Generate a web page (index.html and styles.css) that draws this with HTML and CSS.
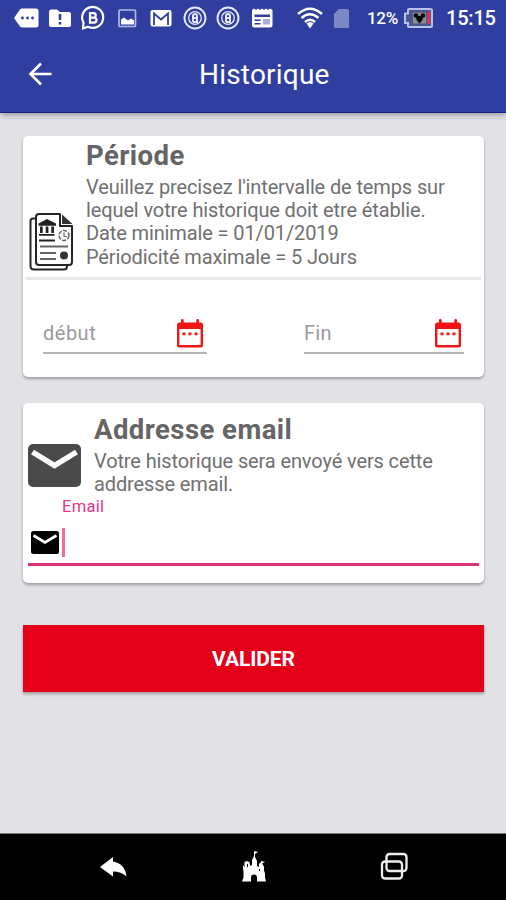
FILE: index.html
```html
<!DOCTYPE html>
<html lang="fr">
<head>
<meta charset="utf-8">
<title>Historique</title>
<link rel="stylesheet" href="styles.css">
</head>
<body>
<div class="screen">
  <header class="top">
    <div class="status">
      <div class="notifications">
        <svg viewBox="0 0 26 26"><path fill="#fff" d="M1 13 7 4.500Q8 3.500 9 3.500H23Q25.500 3.500 25.500 6V20Q25.500 22.500 23 22.500H9Q8 22.500 7 21.500Z"/><g fill="#303f9f"><circle cx="9.500" cy="13" r="1.400"/><circle cx="14.500" cy="13" r="1.400"/><circle cx="19.500" cy="13" r="1.400"/></g></svg>
        <svg viewBox="0 0 26 26"><path fill="#fff" d="M2 7Q2 4.500 4 4.500H10L13 7H22Q24 7 24 9V20Q24 22 22 22H4Q2 22 2 20Z"/><path fill="#303f9f" d="M11.700 9h2.600v6h-2.600zM11.700 17h2.600v2.500h-2.600z"/></svg>
        <svg viewBox="0 0 26 26"><path fill="none" stroke="#fff" stroke-width="2.200" d="M3 23.500 3.500 17.500A10.500 10.500 0 1 1 8 21.800Z"/><path fill="none" stroke="#fff" stroke-width="2.200" d="M10 8.200h3.500a2.200 2.200 0 0 1 0 4.400H10h4a2.500 2.500 0 0 1 0 5h-4zV17.600"/></svg>
        <svg viewBox="0 0 26 26"><rect x="5" y="5" width="16.500" height="16.500" rx="1" fill="#303f9f" stroke="#b4bbe6" stroke-width="1.700"/><path fill="#fff" d="M7 19.500v-5l3-2 4 3 3-2 3 2v4z"/></svg>
        <svg viewBox="0 0 26 26"><rect x="2.500" y="5" width="21" height="16.500" rx="2" fill="#fff"/><path fill="none" stroke="#303f9f" stroke-width="1.800" d="M6 20V8.500l7 6 7-6V20"/></svg>
        <svg viewBox="0 0 26 26"><g fill="none" stroke="#e6e9fb"><circle cx="13" cy="13" r="10.500" stroke-width="1.900"/><circle cx="13" cy="13" r="6.300" stroke-width="1.300"/><path stroke-width="2" d="M11 17v-6q0-2 2-2t2 2v2h-4m4 0v4h-4"/></g></svg>
        <svg viewBox="0 0 26 26"><g fill="none" stroke="#e6e9fb"><circle cx="13" cy="13" r="10.500" stroke-width="1.900"/><circle cx="13" cy="13" r="6.300" stroke-width="1.300"/><path stroke-width="2" d="M11 17v-6q0-2 2-2t2 2v2h-4m4 0v4h-4"/></g></svg>
        <svg viewBox="0 0 26 26"><path fill="#fff" d="M3 5l2-1.500L7 5l2-1.500L11 5l2-1.500L15 5l2-1.500L19 5l2-1.500L23.500 5v15q0 2.500-2.500 2.500H5.500Q3 22.500 3 20z"/><path fill="#303f9f" d="M5.500 9.500H21v2.500H5.500zM5.500 14.500h6V16h-6zM5.500 18h6v1.500h-6z"/><path fill="#a9b0dc" d="M14 14h7v5.500h-7z"/></svg>
      </div>
      <svg class="wifi" viewBox="0 0 26 24"><g fill="none" stroke="#fff" stroke-width="2.500"><path d="M1 8q12-10.500 24 0M4.500 12q8.500-7.500 17 0M8 16q5-4.500 10 0"/></g><path fill="#fff" d="M9.500 17.500q3.500-3 7 0L13 22.500z"/></svg>
      <svg class="sim" viewBox="0 0 15 19"><path fill="#7e87c5" d="M5 0h8.500Q15 0 15 1.500v16q0 1.500-1.500 1.500h-12Q0 19 0 17.500V5z"/></svg>
      <span class="percent">12%</span>
      <svg class="battery" viewBox="0 0 29 20"><path fill="#4b558f" stroke="#b9c0ea" stroke-width="2" d="M5 1h21.500q1.500 0 1.500 1.500v15q0 1.500-1.500 1.500H5q-1 0-1-1v-3H1V5.500h3V2q0-1 1-1z"/><path fill="#8d8c92" d="M9 4.500h13v11H9z"/><g fill="#080808"><circle cx="12" cy="7.500" r="2.300"/><circle cx="19" cy="7.500" r="2.300"/><path d="M12 8h7l-.5 4-3 3.500-3-3.500z"/></g><path fill="#f3313f" d="M23.500 4H26v12h-2.500z"/></svg>
      <span class="clock">15:15</span>
    </div>
    <div class="appbar">
      <svg class="back" viewBox="0 0 24 24"><path fill="none" stroke="#fff" stroke-width="2.600" d="M23.500 12H2.500M13 1.500 2.500 12 13 22.500"/></svg>
      <h1 class="title">Historique</h1>
    </div>
  </header>

  <main class="content">
    <section class="card period">
      <div class="intro">
        <svg class="docs" viewBox="0 0 46 60"><g fill="none" stroke="#252525" stroke-width="2" stroke-linejoin="round"><path d="M7 6.500H4Q1.500 6.500 1.500 9V54Q1.500 57.500 5 57.500H35Q38 57.500 38 54V53"/><path d="M10 2H31V14H43V50Q43 53 40 53H10Q7 53 7 50V5Q7 2 10 2z"/></g><path fill="#333" d="M33 2.500 43.500 12H33z"/><g fill="#222"><path d="M18 7l9 4.500v2.200H9.500v-2.200zM11 14.500h2.700V21H11zM16.700 14.500h2.700V21h-2.700zM22.300 14.500H25V21h-2.700zM10 22h15.500v1.800H10zM10 27.500h16v2H10z"/></g><g fill="none" stroke="#666"><circle cx="35" cy="23.500" r="5" stroke-width="1.500" stroke-dasharray="4 1.500"/><path d="M35 20.500v3.500l3 1" stroke-width="1.200"/><path stroke-width="1.800" d="M11 34.500h28M11 41h16M11 47h16"/></g><circle cx="35" cy="43.500" r="4" fill="#333"/></svg>
        <div class="copy">
          <h2 class="heading">Période</h2>
          <p class="text">Veuillez precisez l'intervalle de temps sur<br>lequel votre historique doit etre établie.<br>Date minimale = 01/01/2019<br>Périodicité maximale = 5 Jours</p>
        </div>
      </div>
      <div class="dates">
        <div class="date start"><span>début</span>
          <svg class="calendar" viewBox="0 0 26 29"><path fill="#f01414" d="M4 1q0-1 1.300-1T6.700 1v2.500H19.300V1q0-1 1.300-1T22 1v2.500h1.500Q26 3.500 26 6v20q0 2.500-2.500 2.500h-21Q0 28.500 0 26V6Q0 3.500 2.500 3.500H4z"/><path fill="#fff" d="M2.400 10h21.200v16H2.400z"/><path fill="#f01414" d="M5.500 13.500h3v2.800h-3zM11.500 13.500h3v2.800h-3zM17.500 13.500h3v2.800h-3z"/></svg>
        </div>
        <div class="date end"><span>Fin</span>
          <svg class="calendar" viewBox="0 0 26 29"><path fill="#f01414" d="M4 1q0-1 1.300-1T6.700 1v2.500H19.300V1q0-1 1.300-1T22 1v2.500h1.500Q26 3.500 26 6v20q0 2.500-2.500 2.500h-21Q0 28.500 0 26V6Q0 3.500 2.500 3.500H4z"/><path fill="#fff" d="M2.400 10h21.200v16H2.400z"/><path fill="#f01414" d="M5.500 13.500h3v2.800h-3zM11.500 13.500h3v2.800h-3zM17.500 13.500h3v2.800h-3z"/></svg>
        </div>
      </div>
    </section>

    <section class="card address">
      <div class="intro">
        <svg class="mail-large" viewBox="0 0 53 43"><rect width="53" height="43" rx="5" fill="#4a4a4a"/><path fill="none" stroke="#fff" stroke-width="5.500" d="M4.500 8 26.500 21.500 48.500 8"/></svg>
        <div class="copy">
          <h2 class="heading">Addresse email</h2>
          <p class="text">Votre historique sera envoyé vers cette<br>addresse email.</p>
        </div>
      </div>
      <div class="label">Email</div>
      <div class="field">
        <svg class="mail-small" viewBox="0 0 28 23"><rect width="28" height="23" rx="2.500" fill="#000"/><path fill="none" stroke="#fff" stroke-width="2.700" d="M2.500 4.500 14 11.500 25.500 4.500"/></svg>
        <i class="cursor"></i>
      </div>
    </section>

    <button class="submit">VALIDER</button>
  </main>

  <nav class="nav">
    <svg viewBox="0 0 32 32"><path fill="#fff" d="M2 16 15 6V10.500q12 2 13.500 15Q23 20.500 15 20.500v5z"/></svg>
    <svg viewBox="0 0 32 32"><path fill="#fff" d="M16 0l4 1-3 2v3l2 4v5l2 1v-3l2-2V10l4 1-3 1.500 2 3v4l1 3v4l1 4H19v-4q0-3-3-3t-3 3v4H4l1.500-4v-6L5 17v-3l1.500 2V11l2-1 3 1 .5 4 2-1V9l2-4z"/><path fill="#000" d="M9 13h1v3H9zM21 18h1v2h-1z"/></svg>
    <svg viewBox="0 0 32 32"><g fill="none" stroke="#eee" stroke-width="2.300"><rect x="8.500" y="3" width="20" height="17" rx="3"/><rect x="4" y="10.500" width="20" height="17" rx="3"/></g></svg>
  </nav>
</div>
</body>
</html>
```

FILE: styles.css
```css
* { box-sizing: border-box; }
body { margin: 0; font-family: Roboto, "Liberation Sans", sans-serif; }
h1, h2, p { margin: 0; }
svg { display: block; flex: none; overflow: visible; }
.screen { width: 506px; height: 900px; display: flex; flex-direction: column; background: #e1e1e6; overflow: hidden; }
.top { height: 113px; flex: none; background: #303f9f; border-bottom: 1px solid #13258c; box-shadow: 0 1px 7px rgba(0,0,0,.4); color: #fff; }
.status { height: 36px; display: flex; align-items: center; padding-left: 9px; }
.notifications { width: 270px; display: grid; grid-template-columns: repeat(8, 1fr); justify-items: center; }
.notifications svg { width: 26px; height: 26px; margin-top: -1px; }
.wifi { width: 26px; height: 24px; margin-left: 18px; }
.sim { width: 15px; height: 19px; margin-left: 11px; }
.percent { width: 31px; margin-left: 18px; font-size: 17px; font-weight: 500; white-space: nowrap; letter-spacing: -.3px; }
.battery { width: 29px; height: 20px; margin: -1px 0 0 6px; }
.clock { margin-left: 13px; font-size: 20px; font-weight: 500; letter-spacing: -.2px; }
.appbar { height: 76px; display: flex; align-items: center; padding-left: 28px; }
.back { width: 24px; height: 24px; margin-top: -1px; }
.title { margin-left: 147px; font-size: 28px; line-height: 32px; font-weight: 400; letter-spacing: .2px; white-space: nowrap; padding-top: 2px; }
.content { flex: 1; padding: 23px 22px 0 23px; }
.card { background: #fff; border-radius: 5px; box-shadow: 0 2px 3px rgba(0,0,0,.3); }
.intro { display: flex; }
.heading { font-size: 27.500px; line-height: 32px; font-weight: 700; letter-spacing: .45px; color: #656565; white-space: nowrap; }
.text { margin-top: 4px; font-size: 20px; line-height: 23.200px; letter-spacing: -.12px; color: #707070; white-space: nowrap; }
.period { height: 241px; padding: 4px 3px 0; }
.period .intro { height: 140px; border-bottom: 3px solid #e9e9e9; padding-left: 3px; }
.docs { width: 46px; height: 60px; margin-top: 72px; }
.period .copy { margin-left: 11px; }
.dates { display: flex; justify-content: space-between; padding: 34px 17px 0; }
.date { height: 40px; border-bottom: 2px solid #b5b5b5; display: flex; justify-content: space-between; align-items: center; color: #9a9a9a; font-size: 20px; }
.start { width: 164px; padding-right: 4px; letter-spacing: .5px; }
.end { width: 160px; padding-right: 3px; letter-spacing: .3px; }
.calendar { width: 26px; height: 29px; }
.address { height: 180px; margin-top: 26px; padding: 11px 5px 0; }
.mail-large { width: 53px; height: 43px; margin-top: 30px; }
.address .copy { margin-left: 13px; }
.label { height: 20px; margin-top: 1px; padding-left: 34px; font-size: 16.500px; line-height: 20px; letter-spacing: .3px; color: #e5358a; }
.field { height: 50px; border-bottom: 3px solid #db3578; display: flex; align-items: center; padding: 6px 0 0 3px; margin-top: -1px; }
.mail-small { width: 28px; height: 23px; }
.cursor { width: 3px; height: 29px; margin-left: 3px; background: #ef6c9d; }
.submit { display: block; width: 461px; height: 67px; margin: 42px 0 0; padding: 2px 0 0; border: 0; background: #e30018; color: #fff; font: 700 21px/65px Roboto, "Liberation Sans", sans-serif; letter-spacing: -.1px; box-shadow: 0 2px 3px rgba(0,0,0,.3); }
.nav { height: 67px; flex: none; background: #000; border-top: 1px solid #777; display: flex; justify-content: space-between; align-items: center; padding: 0 96px 0 98px; }
.nav svg { width: 32px; height: 32px; }
```
